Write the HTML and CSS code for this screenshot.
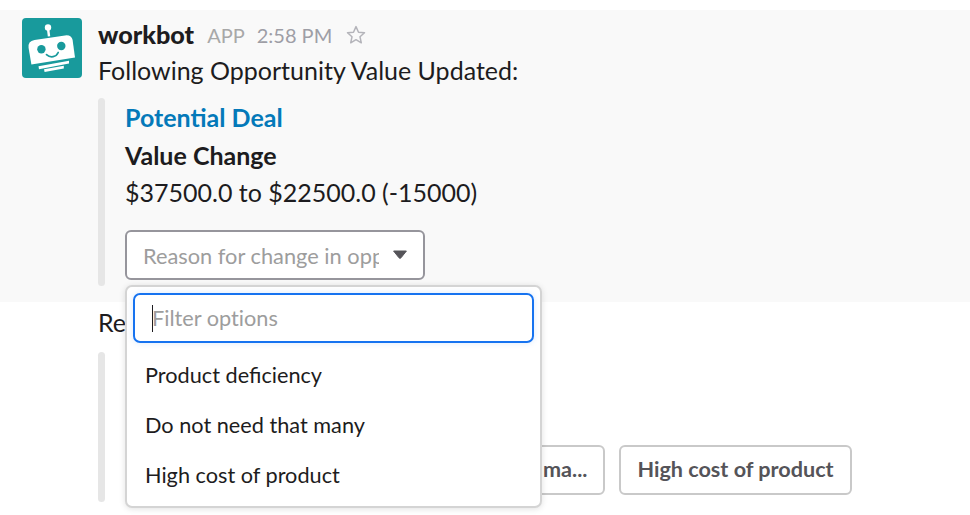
FILE: index.html
```html
<!DOCTYPE html>
<html lang="en">
<head>
  <meta charset="UTF-8" />
  <meta name="viewport" content="width=device-width, initial-scale=1.0"/>
  <title>workbot</title>
  <link rel="stylesheet" href="styles.css">
</head>
<body>
  <div class="message active">
    <svg class="avatar" viewBox="0 0 60 60">
      <rect width="60" height="60" rx="4" fill="#189a9c"/>
      <g fill="#fff">
        <circle cx="26" cy="9.5" r="3.2"/>
        <path d="M24.8 10l2.4-.3 1 8.6-2.4.3z"/>
        <path d="M12.5 22L43 17.4Q49.5 16.6 50.6 22L53 39.6L9.4 46.6L6.6 30Q5.6 23.2 12.5 22z"/>
        <path d="M16.5 48.3L47 42.7v2.9L17 51.2z"/>
        <path d="M22 51.3L41.8 47.8v2.7L22.6 54z"/>
      </g>
      <circle cx="19.4" cy="31.2" r="4.2" fill="#189a9c"/>
      <circle cx="39.3" cy="28" r="4.2" fill="#189a9c"/>
      <path d="M24.5 36.6q3 2.8 6.6 2.1t5.1-4.2" fill="none" stroke="#189a9c" stroke-width="1.7" stroke-linecap="round"/>
    </svg>

    <div class="content">
      <div class="header">
        <span class="name">workbot</span>
        <span class="tag">APP</span>
        <span class="time">2:58 PM</span>
        <svg class="star" viewBox="0 0 20 20">
          <path d="M10 1.6l2.5 5.6 6 .6-4.5 4 1.3 6-5.3-3.1-5.3 3.1 1.3-6-4.5-4 6-.6z"/>
        </svg>
      </div>
      <p class="text">Following Opportunity Value Updated:</p>

      <div class="attachment">
        <a class="title">Potential Deal</a>
        <h4 class="field-name">Value Change</h4>
        <p class="field-value">$37500.0 to $22500.0 (-15000)</p>

        <div class="select-wrap">
          <div class="select">
            <span class="select-label">Reason for change in opp</span>
            <svg class="caret" viewBox="0 0 16 10">
              <path d="M1.6 1h12.8L9 7.8q-1 1-2 0z"/>
            </svg>
          </div>

          <div class="menu">
            <div class="filter"><span class="cursor"></span>Filter options</div>
            <ul class="options">
              <li>Product deficiency</li>
              <li>Do not need that many</li>
              <li>High cost of product</li>
            </ul>
          </div>
        </div>
      </div>
    </div>
  </div>

  <div class="message">
    <div class="content">
      <p class="text">Re</p>
      <div class="attachment actions">
        <button class="btn">ma...</button>
        <button class="btn">High cost of product</button>
      </div>
    </div>
  </div>
</body>
</html>
```
FILE: styles.css
```css
* {
  box-sizing: border-box;
}

body {
  margin: 0;
  padding-top: 10px;
  height: 515px;
  overflow: hidden;
  background: #fff;
  color: #1d1c20;
  font-family: Lato, sans-serif;
  font-size: 25px;
}

p, h4, ul {
  margin: 0;
  padding: 0;
}

.message {
  display: flex;
  padding-left: 98px;
}

.message.active {
  height: 292px;
  padding-top: 8px;
  padding-left: 22px;
  background: #f9f9f9;
}

.avatar {
  width: 60px;
  height: 60px;
  margin-right: 16px;
  flex-shrink: 0;
}

.header {
  display: flex;
  align-items: center;
  height: 33px;
  color: #9e9ea6;
  font-size: 20px;
}

.name {
  margin-top: -1px;
  color: #1d1c20;
  font-size: 25.2px;
  font-weight: 900;
}

.tag {
  margin-left: 13px;
  color: #a8a8a8;
}

.time {
  margin-left: 12px;
}

.star {
  width: 20px;
  height: 20px;
  margin-left: 14px;
  fill: none;
  stroke: #b4b4ba;
  stroke-width: 1.5;
  stroke-linejoin: round;
}

.text {
  height: 40px;
  line-height: 40px;
}

.active .text {
  line-height: 39px;
}

.attachment {
  position: relative;
  height: 188px;
  margin-top: 7px;
  padding-left: 27px;
}

.attachment::before {
  content: "";
  position: absolute;
  left: 0;
  top: 0;
  bottom: 0;
  width: 7px;
  border-radius: 4px;
  background: #e6e6e6;
}

.title {
  display: block;
  line-height: 39px;
  color: #0479b9;
  font-weight: 700;
}

.field-name {
  line-height: 37px;
  font-size: 25px;
  font-weight: 700;
}

.field-value {
  line-height: 36px;
}

.select-wrap {
  position: relative;
  width: 300px;
  margin-top: 20px;
}

.select {
  display: flex;
  align-items: center;
  height: 50px;
  padding-left: 16px;
  border: 2px solid #96959c;
  border-radius: 6px;
  background: #fff;
  color: #9d9d9d;
  font-size: 21.8px;
}

.select-label {
  width: 236px;
  overflow: hidden;
  white-space: nowrap;
}

.caret {
  width: 16px;
  height: 10px;
  margin-left: 13px;
  fill: #555459;
  stroke: #555459;
  stroke-linejoin: round;
}

.menu {
  position: absolute;
  top: 55px;
  left: 0;
  z-index: 1;
  width: 417px;
  height: 223px;
  padding: 6px;
  border: 2px solid #d4d4d4;
  border-radius: 7px;
  background: #fff;
  box-shadow: 0 1px 6px rgba(0, 0, 0, 0.12);
}

.filter {
  display: flex;
  align-items: center;
  height: 50px;
  padding-left: 17px;
  border: 2px solid #1673f0;
  border-radius: 7px;
  box-shadow: 0 0 6px rgba(22, 115, 240, 0.15);
  color: #9d9d9d;
  font-size: 21.7px;
  font-variant-ligatures: none;
}

.cursor {
  width: 1px;
  height: 27px;
  margin-right: -1px;
  background: #1d1c20;
}

.options {
  margin-top: 7px;
  padding-left: 12px;
  list-style: none;
  font-size: 21.7px;
  line-height: 50px;
}

.actions {
  display: flex;
  height: 150px;
  margin-top: 10px;
  padding-left: 427px;
  padding-top: 93px;
}

.btn {
  height: 50px;
  margin-right: 14px;
  padding: 0 16px 2px;
  border: 2px solid #c9c9c9;
  border-radius: 6px;
  background: #fff;
  color: #555459;
  font-family: Lato, sans-serif;
  font-size: 21.6px;
  font-weight: 700;
}
```
